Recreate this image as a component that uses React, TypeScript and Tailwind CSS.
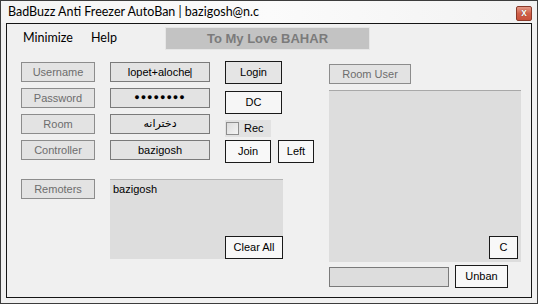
const ui = { fontFamily: '"Liberation Sans", Arial, sans-serif' };
const seg = { fontFamily: 'Lato, "Noto Sans", sans-serif' };

function Caption({ text, className = "" }: { text: string; className?: string }) {
  return (
    <div
      className={`flex items-center justify-center h-[20px] border border-[#8c8c8c] bg-[#e3e3e3] text-[11px] text-[#6d6d6d] ${className}`}
    >
      {text}
    </div>
  );
}

function Field({ children }: { children: React.ReactNode }) {
  return (
    <div className="flex items-center justify-center h-[20px] border border-[#7a7a7a] bg-[#e3e3e3] text-[11px] text-black">
      {children}
    </div>
  );
}

function Btn({ text, className = "" }: { text: string; className?: string }) {
  return (
    <div
      className={`flex items-center justify-center h-[23px] border border-[#1a1a1a] text-[11px] text-black ${className}`}
    >
      {text}
    </div>
  );
}

export default function App() {
  return (
    <div
      className="w-[538px] h-[304px] border border-[#3c3c3c] bg-[#f0f0f0] flex flex-col overflow-hidden"
      style={ui}
    >
      {/* title bar */}
      <div className="h-[22px] flex items-center pl-[7px] pr-[5px] bg-gradient-to-r from-[#f4f4f4] via-[#fbfbfb] to-[#f2f2f2]">
        <span className="text-[12.5px] text-black" style={seg}>
          BadBuzz Anti Freezer AutoBan | bazigosh@n.c
        </span>
        <div className="ml-auto w-[16px] h-[15px] mt-[2px] rounded-[2px] border border-[#8a3a2a] bg-gradient-to-b from-[#e49a88] via-[#d0604a] to-[#c8503a] flex items-center justify-center">
          <span className="text-[10px] leading-none font-bold text-white" style={{ textShadow: "0 0 1px #5a1a10" }}>
            x
          </span>
        </div>
      </div>

      {/* client area */}
      <div className="flex-1 mx-[5px] mb-[5px] border border-[#151515] bg-[#f0f0f0] flex flex-col">
        {/* menu strip */}
        <div className="h-[28px] flex items-center pl-[16px] text-[12.5px] text-black" style={seg}>
          <span className="w-[68px]">Minimize</span>
          <span className="w-[74px]">Help</span>
          <div
            className="self-start mt-[3px] w-[205px] h-[23px] border border-[#e6e6e6] bg-[#c3c3c3] flex items-center justify-center text-[13px] font-bold text-[#7b7b7b]"
            style={ui}
          >
            To My Love BAHAR
          </div>
        </div>

        {/* body */}
        <div className="flex">
          {/* left section */}
          <div className="pl-[14px] flex flex-col">
            <div className="flex mt-[9px]">
              <div className="w-[74px] mt-[1px] flex flex-col gap-[6px]">
                <Caption text="Username" />
                <Caption text="Password" />
                <Caption text="Room" />
                <Caption text="Controller" />
              </div>
              <div className="w-[100px] ml-[15px] mt-[1px] flex flex-col gap-[6px]">
                <Field>
                  lopet+aloche<span className="-ml-[1px]">|</span>
                </Field>
                <Field>
                  <span className="text-[9px] tracking-[1px]">●●●●●●●●</span>
                </Field>
                <Field>
                  <span dir="rtl" style={{ fontFamily: '"DejaVu Sans", sans-serif' }} className="text-[11px]">
                    دخترانه
                  </span>
                </Field>
                <Field>bazigosh</Field>
              </div>
              <div className="ml-[15px] flex flex-col">
                <Btn text="Login" className="w-[57px] bg-[#e5e5e5]" />
                <Btn text="DC" className="w-[57px] mt-[7px] bg-[#f6f6f6]" />
                <div className="mt-[6px] w-[46px] h-[17px] bg-[#e2e2e2] flex items-center pl-[1px]">
                  <div className="w-[13px] h-[13px] border border-[#8e8e8e] bg-gradient-to-br from-[#dcdcdc] to-[#f4f4f4]" />
                  <span className="ml-[5px] text-[11px] text-black">Rec</span>
                </div>
                <div className="mt-[3px] flex">
                  <Btn text="Join" className="w-[46px] bg-[#f8f8f8]" />
                  <Btn text="Left" className="w-[36px] ml-[7px] bg-[#f8f8f8]" />
                </div>
              </div>
            </div>

            <div className="flex mt-[16px]">
              <Caption text="Remoters" className="w-[74px]" />
              <div className="ml-[15px] w-[173px] h-[80px] border-t border-[#b4b4b4] bg-[#dddddd] flex flex-col">
                <span className="pl-[3px] pt-[1px] text-[11px] text-black">bazigosh</span>
                <Btn text="Clear All" className="mt-auto self-end w-[58px] bg-[#f8f8f8]" />
              </div>
            </div>
          </div>

          {/* right section */}
          <div className="ml-[15px] w-[192px] flex flex-col">
            <Caption text="Room User" className="mt-[12px] w-[82px]" />
            <div className="mt-[6px] h-[172px] border-t border-[#a8a8a8] bg-[#dddddd] flex flex-col items-end justify-end pr-[3px] pb-[3px]">
              <Btn text="C" className="w-[29px] bg-[#f8f8f8]" />
            </div>
            <div className="mt-[3px] flex items-start">
              <div className="mt-[2px] w-[120px] h-[20px] border border-[#7a7a7a] bg-[#dddddd]" />
              <Btn text="Unban" className="ml-[6px] w-[53px] bg-[#f8f8f8]" />
            </div>
          </div>
        </div>
      </div>
    </div>
  );
}
